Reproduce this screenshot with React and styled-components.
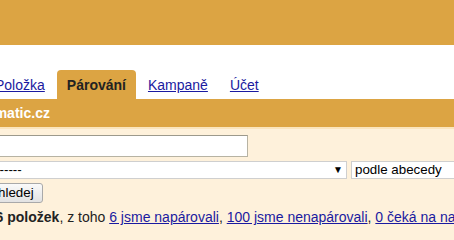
import React from 'react';
import styled, { createGlobalStyle } from 'styled-components';

const GlobalStyle = createGlobalStyle`
  html, body {
    margin: 0;
    padding: 0;
    background: #fef1db;
    font-family: 'Liberation Sans', Arial, sans-serif;
    overflow: hidden;
  }
`;

const Page = styled.div`
  margin-left: -40px; /* page is scrolled sideways in the shot */
  width: 600px;
`;

const TopBar = styled.div`
  height: 45px;
  background: #dca443;
`;

const TabRow = styled.nav`
  background: #fff;
  display: flex;
  align-items: flex-end;
  padding: 25px 0 0 25px;
`;

const Tab = styled.a`
  display: block;
  padding: 7px 10px 6px;
  margin-right: 2px;
  font-size: 14px;
  line-height: 16px;
  border-radius: 4px 4px 0 0;
  white-space: nowrap;
  color: ${p => (p.$active ? '#222' : '#1a1aa0')};
  background: ${p => (p.$active ? '#dca443' : 'transparent')};
  font-weight: ${p => (p.$active ? 700 : 400)};
  text-decoration: ${p => (p.$active ? 'none' : 'underline')};
  cursor: pointer;
`;

const TitleBar = styled.div`
  background: #dca443;
  border-bottom: 2px solid #fbe5bd;
  padding: 6px 0 6px 2px;
  color: #fff;
  font-size: 14px;
  line-height: 16px;
  font-weight: 700;
  white-space: nowrap;
`;

const Content = styled.div`
  padding-top: 6px;
  display: flex;
  flex-direction: column;
  align-items: flex-start;
`;

const SearchInput = styled.input`
  box-sizing: border-box;
  width: 288px;
  height: 22px;
  border: 1px solid #b7b3a3;
  border-top-color: #9c998c;
  background: #fff;
  font-family: 'Liberation Sans', Arial, sans-serif;
  font-size: 13.33px;
  padding: 2px 3px;
  margin: 0;
`;

const SelectRow = styled.div`
  display: flex;
  gap: 4px;
  margin-top: 4px;
`;

const SelectBox = styled.div`
  position: relative;
  box-sizing: border-box;
  width: ${p => p.$width}px;
  height: 18px;
  border: 1px solid #cfcfcf;
  background: #fff;
  font-size: 13.33px;
  line-height: 16px;
  padding: 0 3px;
  white-space: nowrap;
  overflow: hidden;
  color: #000;
`;

const Arrow = styled.span`
  position: absolute;
  right: 3px;
  top: 0;
  font-size: 10px;
  line-height: 16px;
  color: #000;
`;

const Button = styled.button`
  margin-top: 4px;
  margin-left: 14px;
  box-sizing: border-box;
  height: 20px;
  padding: 0 8px;
  font-family: 'Liberation Sans', Arial, sans-serif;
  font-size: 13.33px;
  line-height: 16px;
  color: #000;
  background: linear-gradient(#fafafa, #e2e2e2);
  border: 1px solid #a9a9a9;
  border-radius: 3px;
`;

const Summary = styled.p`
  margin: 6px 0 0 20px;
  font-size: 14px;
  line-height: 16px;
  color: #222;
  white-space: nowrap;

  a {
    color: #1a1aa0;
    text-decoration: underline;
  }
`;

export default function App() {
  return (
    <>
      <GlobalStyle />
      <Page>
        <TopBar />
        <TabRow>
          <Tab>Položka</Tab>
          <Tab $active>Párování</Tab>
          <Tab>Kampaně</Tab>
          <Tab>Účet</Tab>
        </TabRow>
        <TitleBar>Feedmatic.cz</TitleBar>
        <Content>
          <SearchInput defaultValue="" />
          <SelectRow>
            <SelectBox $width={387}>
              -------------
              <Arrow>▼</Arrow>
            </SelectBox>
            <SelectBox $width={200}>
              podle abecedy
              <Arrow>▼</Arrow>
            </SelectBox>
          </SelectRow>
          <Button>Vyhledej</Button>
          <Summary>
            <b>106 položek</b>, z toho <a>6 jsme napárovali</a>,{' '}
            <a>100 jsme nenapárovali</a>, <a>0 čeká na napárování</a>
          </Summary>
        </Content>
      </Page>
    </>
  );
}
